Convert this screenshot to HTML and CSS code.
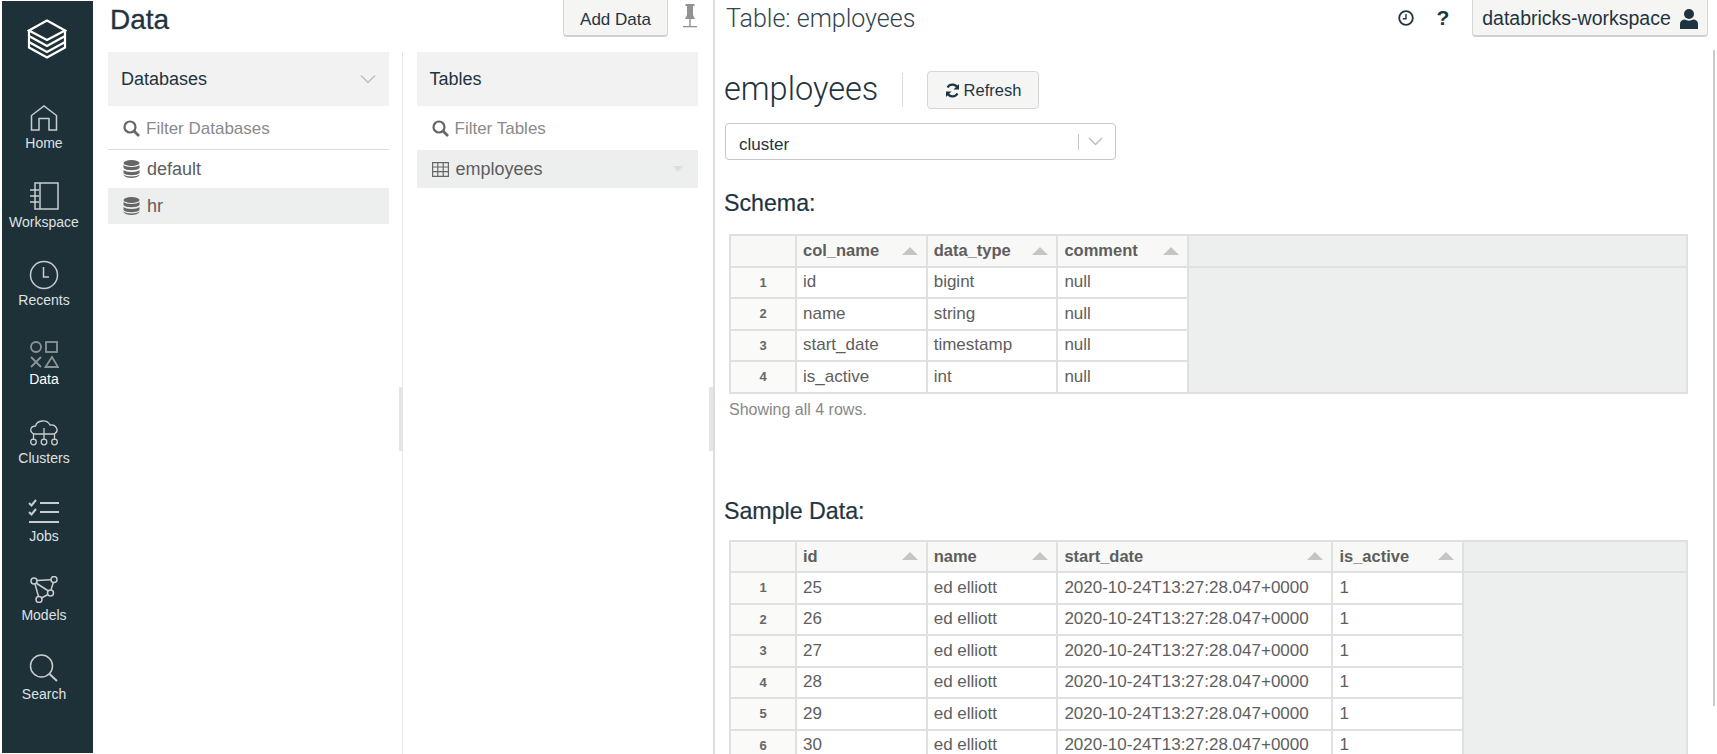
FILE: index.html
```html
<!DOCTYPE html>
<html lang="en">
<head>
  <meta charset="UTF-8">
  <title>Data - Table: employees</title>
  <link rel="stylesheet" href="styles.css">
</head>
<body>
  <div class="app">
    <nav class="sidebar">
      <div class="logo">
        <svg width="40" height="40" viewBox="0 0 40 40" fill="none" stroke="#fff" stroke-width="2.2">
          <path d="M20 1.5 38 11.5 20 21 2 11.5Z"/>
          <path d="M2 11.5V17L20 27 38 17V11.5"/>
          <path d="M2 17V23L20 33 38 23V17"/>
          <path d="M2 23V28.5L20 38.5 38 28.5V23"/>
        </svg>
      </div>
      <a class="nav-item">
        <span class="nav-icon">
          <svg width="28" height="26" viewBox="0 0 28 26" fill="none" stroke="#c9cdcf" stroke-width="1.5">
            <path d="M1.5 25V10.5L14 1 26.5 10.5V25H19V13.5H9V25Z"/>
          </svg>
        </span>
        <span>Home</span>
      </a>
      <a class="nav-item">
        <span class="nav-icon">
          <svg width="30" height="28" viewBox="0 0 30 28" fill="none" stroke="#c9cdcf" stroke-width="1.5">
            <path d="M6 1H29V27H6Z"/>
            <path d="M11 1V27"/>
            <path d="M1 8H10M1 14H10M1 20H10"/>
          </svg>
        </span>
        <span>Workspace</span>
      </a>
      <a class="nav-item">
        <span class="nav-icon">
          <svg width="30" height="30" viewBox="0 0 30 30" fill="none" stroke="#c9cdcf" stroke-width="1.5">
            <circle cx="15" cy="15" r="13.5"/>
            <path d="M14.5 7V17H20"/>
          </svg>
        </span>
        <span>Recents</span>
      </a>
      <a class="nav-item active">
        <span class="nav-icon">
          <svg width="30" height="28" viewBox="0 0 30 28" fill="none" stroke="#8d9498" stroke-width="1.8">
            <circle cx="7" cy="7" r="5"/>
            <rect x="17" y="2" width="11" height="10"/>
            <path d="M2 17 12 27M12 17 2 27"/>
            <path d="M23 17 29 27H16.500Z"/>
          </svg>
        </span>
        <span>Data</span>
      </a>
      <a class="nav-item">
        <span class="nav-icon">
          <svg width="30" height="27" viewBox="0 0 30 27" fill="none" stroke="#c9cdcf" stroke-width="1.3">
            <path d="M5 15C0 13 1 7 6.500 7 8 1 18 0 21 6 27 5 31 12 25 15Z"/>
            <path d="M4.500 21V15M15 21V9M25.500 21V15"/>
            <circle cx="4.500" cy="23" r="2.800"/>
            <circle cx="15" cy="23" r="2.800"/>
            <circle cx="25.500" cy="23" r="2.800"/>
          </svg>
        </span>
        <span>Clusters</span>
      </a>
      <a class="nav-item">
        <span class="nav-icon">
          <svg width="32" height="26" viewBox="0 0 32 26" fill="none" stroke="#c9cdcf" stroke-width="2">
            <path d="M1 5 3.500 7.500 8 2M1 14 3.500 16.500 8 11"/>
            <path d="M12 5H31M12 14H31M1 24H31"/>
          </svg>
        </span>
        <span>Jobs</span>
      </a>
      <a class="nav-item">
        <span class="nav-icon">
          <svg width="28" height="27" viewBox="0 0 28 27" fill="none" stroke="#c9cdcf" stroke-width="1.5">
            <circle cx="4" cy="5" r="3"/>
            <circle cx="24" cy="3.500" r="3"/>
            <circle cx="20.500" cy="17" r="3"/>
            <circle cx="9" cy="23.500" r="3"/>
            <path d="M7 4.600 21 3.700M23.300 6.500 21 14M18 18.500 11.500 22M5 8 8.500 20.500M6 7 18.500 15"/>
          </svg>
        </span>
        <span>Models</span>
      </a>
      <a class="nav-item">
        <span class="nav-icon">
          <svg width="30" height="28" viewBox="0 0 30 28" fill="none" stroke="#c9cdcf" stroke-width="1.5">
            <circle cx="12.500" cy="12" r="11"/>
            <path d="M20.500 20 28 27" stroke-width="2"/>
          </svg>
        </span>
        <span>Search</span>
      </a>
    </nav>

    <section class="data-panel">
      <header class="panel-head">
        <h1 class="panel-title">Data</h1>
        <button class="top-btn add-data">Add Data</button>
        <svg class="pin" width="16" height="26" viewBox="0 0 16 26" fill="#8f9396">
          <path d="M3.500 0H12.500V2H11V11L13 15H3L5 11V2H3.500Z"/>
          <path d="M7.300 15H8.700V22H7.300Z"/>
          <path d="M1 22H15V23.300H1Z"/>
        </svg>
      </header>
      <div class="browser">
        <div class="browser-col">
          <div class="col-head">
            <span>Databases</span>
            <svg width="16" height="10" viewBox="0 0 16 10" fill="none" stroke="#bdc1c2" stroke-width="1.500"><path d="M1 1.500 8 8.500 15 1.500"/></svg>
          </div>
          <div class="filter filter-line">
            <svg width="17" height="17" viewBox="0 0 17 17" fill="none" stroke="#666" stroke-width="2.200"><circle cx="7" cy="7" r="5.500"/><path d="M11 11 16 16" stroke-width="2.600"/></svg>
            <span>Filter Databases</span>
          </div>
          <div class="list-row">
            <svg width="17" height="18" viewBox="0 0 17 18" fill="#666"><ellipse cx="8.500" cy="3" rx="8" ry="3"/><path d="M.5 5c2 2.500 14 2.500 16 0v3c-2 3-14 3-16 0zM.5 10c2 2.500 14 2.500 16 0v3c-2 3-14 3-16 0zM.5 14.500c2 2.500 14 2.500 16 0V15c-2 4-14 4-16 0z"/></svg>
            <span>default</span>
          </div>
          <div class="list-row selected short">
            <svg width="17" height="18" viewBox="0 0 17 18" fill="#666"><ellipse cx="8.500" cy="3" rx="8" ry="3"/><path d="M.5 5c2 2.500 14 2.500 16 0v3c-2 3-14 3-16 0zM.5 10c2 2.500 14 2.500 16 0v3c-2 3-14 3-16 0zM.5 14.500c2 2.500 14 2.500 16 0V15c-2 4-14 4-16 0z"/></svg>
            <span>hr</span>
          </div>
        </div>
        <div class="col-sep"></div>
        <div class="browser-col wide">
          <div class="col-head">
            <span>Tables</span>
          </div>
          <div class="filter">
            <svg width="17" height="17" viewBox="0 0 17 17" fill="none" stroke="#666" stroke-width="2.200"><circle cx="7" cy="7" r="5.500"/><path d="M11 11 16 16" stroke-width="2.600"/></svg>
            <span>Filter Tables</span>
          </div>
          <div class="list-row selected">
            <svg width="17" height="15" viewBox="0 0 17 15" fill="none" stroke="#666" stroke-width="1.200"><path d="M.6.600H16.400V14.400H.6ZM.6 5H16.400M.6 9.700H16.400M5.800.600V14.400M11.200.600V14.400"/></svg>
            <span>employees</span>
            <i class="row-caret"></i>
          </div>
        </div>
      </div>
      <div class="drag-handle left-handle"></div>
    </section>

    <main class="table-panel">
      <div class="drag-handle right-handle"></div>
      <div class="scrollbar"></div>
      <header class="table-top">
        <div class="table-title">Table: employees</div>
        <svg class="clock" width="16" height="16" viewBox="0 0 16 16" fill="none" stroke="#1f3440" stroke-width="1.800"><circle cx="8" cy="8" r="6.800"/><path d="M8 4V8.800H4.800" stroke-width="1.400"/></svg>
        <span class="help">?</span>
        <button class="top-btn workspace">
          databricks-workspace
          <svg width="18" height="20" viewBox="0 0 18 20" fill="#1f3440"><circle cx="9" cy="5" r="5"/><path d="M0 20V15C0 12 2 10.500 5 10.500 7 12 11 12 13 10.500 16 10.500 18 12 18 15V20Z"/></svg>
        </button>
      </header>
      <div class="table-body">
        <div class="name-row">
          <h2 class="table-name">employees</h2>
          <button class="refresh">
            <svg width="15" height="15" viewBox="0 0 15 15" fill="none" stroke="#1f3440" stroke-width="2.200"><path d="M13 5.500C11.500 1 5 0 2.500 4.500"/><path d="M2 9.500C3.500 14 10 15 12.500 10.500"/><path d="M14 1V6.500H8.500Z" fill="#1f3440" stroke="none"/><path d="M1 14V8.500H6.500Z" fill="#1f3440" stroke="none"/></svg>
            Refresh
          </button>
        </div>
        <div class="cluster-select">
          <span>cluster</span>
          <i class="select-sep"></i>
          <svg width="15" height="9" viewBox="0 0 15 9" fill="none" stroke="#bcbfc0" stroke-width="1.500"><path d="M1 1 7.500 7.500 14 1"/></svg>
        </div>

        <h3 class="section-title">Schema:</h3>
        <table class="grid">
          <colgroup><col class="c-num"><col class="c-md"><col class="c-md"><col class="c-md"><col></colgroup>
          <tr>
            <th></th>
            <th><div class="th-in">col_name<i class="sort"></i></div></th>
            <th><div class="th-in">data_type<i class="sort"></i></div></th>
            <th><div class="th-in">comment<i class="sort"></i></div></th>
            <th class="filler"></th>
          </tr>
          <tr><td class="num">1</td><td>id</td><td>bigint</td><td>null</td><td class="filler" rowspan="4"></td></tr>
          <tr><td class="num">2</td><td>name</td><td>string</td><td>null</td></tr>
          <tr><td class="num">3</td><td>start_date</td><td>timestamp</td><td>null</td></tr>
          <tr><td class="num">4</td><td>is_active</td><td>int</td><td>null</td></tr>
        </table>
        <p class="row-count">Showing all 4 rows.</p>

        <h3 class="section-title sample">Sample Data:</h3>
        <table class="grid sample-grid">
          <colgroup><col class="c-num"><col class="c-md"><col class="c-md"><col class="c-lg"><col class="c-md"><col></colgroup>
          <tr>
            <th></th>
            <th><div class="th-in">id<i class="sort"></i></div></th>
            <th><div class="th-in">name<i class="sort"></i></div></th>
            <th><div class="th-in">start_date<i class="sort"></i></div></th>
            <th><div class="th-in">is_active<i class="sort"></i></div></th>
            <th class="filler"></th>
          </tr>
          <tr><td class="num">1</td><td>25</td><td>ed elliott</td><td>2020-10-24T13:27:28.047+0000</td><td>1</td><td class="filler" rowspan="6"></td></tr>
          <tr><td class="num">2</td><td>26</td><td>ed elliott</td><td>2020-10-24T13:27:28.047+0000</td><td>1</td></tr>
          <tr><td class="num">3</td><td>27</td><td>ed elliott</td><td>2020-10-24T13:27:28.047+0000</td><td>1</td></tr>
          <tr><td class="num">4</td><td>28</td><td>ed elliott</td><td>2020-10-24T13:27:28.047+0000</td><td>1</td></tr>
          <tr><td class="num">5</td><td>29</td><td>ed elliott</td><td>2020-10-24T13:27:28.047+0000</td><td>1</td></tr>
          <tr><td class="num">6</td><td>30</td><td>ed elliott</td><td>2020-10-24T13:27:28.047+0000</td><td>1</td></tr>
        </table>
      </div>
    </main>
  </div>
</body>
</html>
```

FILE: styles.css
```css
html, body {
  margin: 0;
  height: 100%;
  overflow: hidden;
  background: #fff;
  font-family: "Liberation Sans", Arial, sans-serif;
  color: #1f3440;
}
.app {
  display: flex;
  height: 754px;
  overflow: hidden;
}

/* left nav */
.sidebar {
  flex: none;
  width: 91px;
  height: 752px;
  margin: 1px 0 0 2px;
  background: #1e3038;
  color: #dfe2e3;
  font-size: 14px;
}
.logo {
  height: 81px;
  padding: 18px 2px 0 0;
  text-align: center;
}
.nav-item {
  display: flex;
  flex-direction: column;
  align-items: center;
  height: 78.7px;
  padding-right: 7px;
}
.nav-icon {
  display: flex;
  align-items: center;
  justify-content: center;
  height: 35px;
}
.nav-item span:last-child {
  line-height: 16px;
}
.nav-item.active {
  color: #fff;
}

/* data browser */
.data-panel {
  position: relative;
  flex: none;
  width: 620px;
  box-sizing: border-box;
  padding: 0 15px;
}
.panel-head {
  display: flex;
  align-items: flex-start;
  height: 52px;
}
.panel-title {
  flex: 1;
  margin: 3px 0 0 2px;
  font-size: 28px;
  font-weight: normal;
  line-height: 34px;
  -webkit-text-stroke: .3px #1f3440;
}
.top-btn {
  height: 37px;
  box-sizing: border-box;
  padding: 2px 0 0;
  border: 1px solid #d5d7d7;
  border-top: 0;
  border-bottom: 2px solid #cfd1d1;
  border-radius: 0 0 4px 4px;
  background: #f5f5f4;
  color: #1f3440;
  font-family: inherit;
}
.add-data {
  width: 105px;
  padding-top: 4px;
  font-size: 17px;
}
.pin {
  margin: 4px 0 0 14px;
}
.browser {
  display: flex;
  height: 702px;
}
.browser-col {
  width: 281px;
}
.browser-col.wide {
  width: 282px;
}
.col-sep {
  width: 1px;
  margin: 0 14px 0 13px;
  background: #e6e8e8;
}
.col-head {
  display: flex;
  align-items: center;
  justify-content: space-between;
  height: 54px;
  padding: 0 13px 0 13px;
  background: #f1f2f1;
  font-size: 18px;
}
.filter {
  display: flex;
  align-items: center;
  gap: 6px;
  height: 44px;
  padding: 1px 15px 0;
  box-sizing: border-box;
  color: #8a8a8a;
  font-size: 17px;
}
.filter-line {
  height: 44px;
  padding-top: 2px;
  border-bottom: 1px solid #dcdede;
}
.list-row {
  display: flex;
  align-items: center;
  gap: 7px;
  height: 38px;
  padding: 0 15px;
  color: #5d5d5d;
  font-size: 18px;
}
.list-row.selected {
  background: #edefee;
}
.list-row.short {
  height: 36px;
}
.row-caret {
  width: 0;
  height: 0;
  margin-left: auto;
  border: 5px solid transparent;
  border-top: 6px solid #dcdede;
  border-bottom: 0;
}
.drag-handle {
  position: absolute;
  top: 387px;
  width: 4px;
  height: 64px;
  background: #e4e6e6;
}
.left-handle {
  left: 306px;
}
.right-handle {
  left: -6px;
}

/* table detail */
.table-panel {
  position: relative;
  flex: 1;
  min-width: 0;
  border-left: 2px solid #dcdddd;
}
.scrollbar {
  position: absolute;
  top: 50px;
  right: 2px;
  width: 2px;
  height: 656px;
  background: #c8caca;
}
.table-top {
  display: flex;
  align-items: flex-start;
  height: 38px;
}
.table-title {
  flex: 1;
  margin: 3px 0 0 11px;
  font-family: Roboto, sans-serif;
  font-size: 25px;
  font-weight: 300;
  line-height: 32px;
  color: #33454d;
}
.clock {
  margin: 10px 0 0;
}
.help {
  width: 16px;
  margin: 5px 21px 0 21px;
  font-size: 21px;
  font-weight: bold;
  line-height: 26px;
  text-align: center;
}
.workspace {
  display: flex;
  align-items: center;
  justify-content: center;
  gap: 9px;
  width: 236px;
  margin-right: 9px;
  font-size: 19.500px;
  font-weight: normal;
}
.table-body {
  padding: 33px 0 0 9px;
}
.name-row {
  display: flex;
  align-items: center;
  height: 38px;
}
.table-name {
  width: 178px;
  margin: 0;
  border-right: 1px solid #dcdede;
  font-family: Roboto, sans-serif;
  font-size: 32.500px;
  font-weight: 300;
  line-height: 33px;
  height: 34px;
}
.refresh {
  display: flex;
  align-items: center;
  justify-content: center;
  gap: 4px;
  width: 112px;
  height: 38px;
  margin-left: 24px;
  padding: 0;
  border: 1px solid #d5d7d7;
  border-radius: 4px;
  background: #f5f5f4;
  color: #1f3440;
  font-family: inherit;
  font-size: 16.500px;
}
.cluster-select {
  display: flex;
  align-items: center;
  width: 391px;
  height: 37px;
  box-sizing: border-box;
  margin: 14px 0 0 1px;
  padding: 0 12px 0 13px;
  border: 1px solid #c6c8c8;
  border-radius: 4px;
  font-size: 17px;
}
.cluster-select span {
  flex: 1;
  padding-top: 7px;
}
.select-sep {
  width: 1px;
  height: 16px;
  margin-right: 9px;
  background: #c6c8c8;
}
.section-title {
  margin: 29px 0 0;
  font-size: 23.200px;
  font-weight: normal;
  line-height: 28px;
  -webkit-text-stroke: .2px #1f3440;
}
.section-title.sample {
  margin-top: 78px;
}
.grid {
  width: 959px;
  margin: 17px 0 0 5px;
  border-collapse: collapse;
  table-layout: fixed;
  color: #5e5e5e;
  font-size: 17px;
}
.sample-grid {
  margin-top: 15px;
}
.c-num {
  width: 66px;
}
.c-md {
  width: 130.700px;
}
.c-lg {
  width: 275px;
}
.grid th,
.grid td {
  height: 31.500px;
  padding: 0 6px;
  border: 2px solid #dfe0e0;
  box-sizing: border-box;
  text-align: left;
  font-weight: normal;
  white-space: nowrap;
  overflow: hidden;
}
.grid th {
  background: #f8f8f7;
  font-weight: bold;
  font-size: 16.500px;
}
.th-in {
  display: flex;
  align-items: center;
  justify-content: space-between;
}
.sort {
  width: 0;
  height: 0;
  margin-right: 2px;
  border: 8px solid transparent;
  border-top: 0;
  border-bottom: 8px solid #c4c6c6;
}
.grid td.num {
  background: #fafaf9;
  font-size: 13px;
  font-weight: bold;
  text-align: center;
  color: #666;
}
.grid .filler {
  background: #edefee;
}
.row-count {
  margin: 7px 0 0 5px;
  color: #888;
  font-size: 16px;
  line-height: 18px;
}
```
